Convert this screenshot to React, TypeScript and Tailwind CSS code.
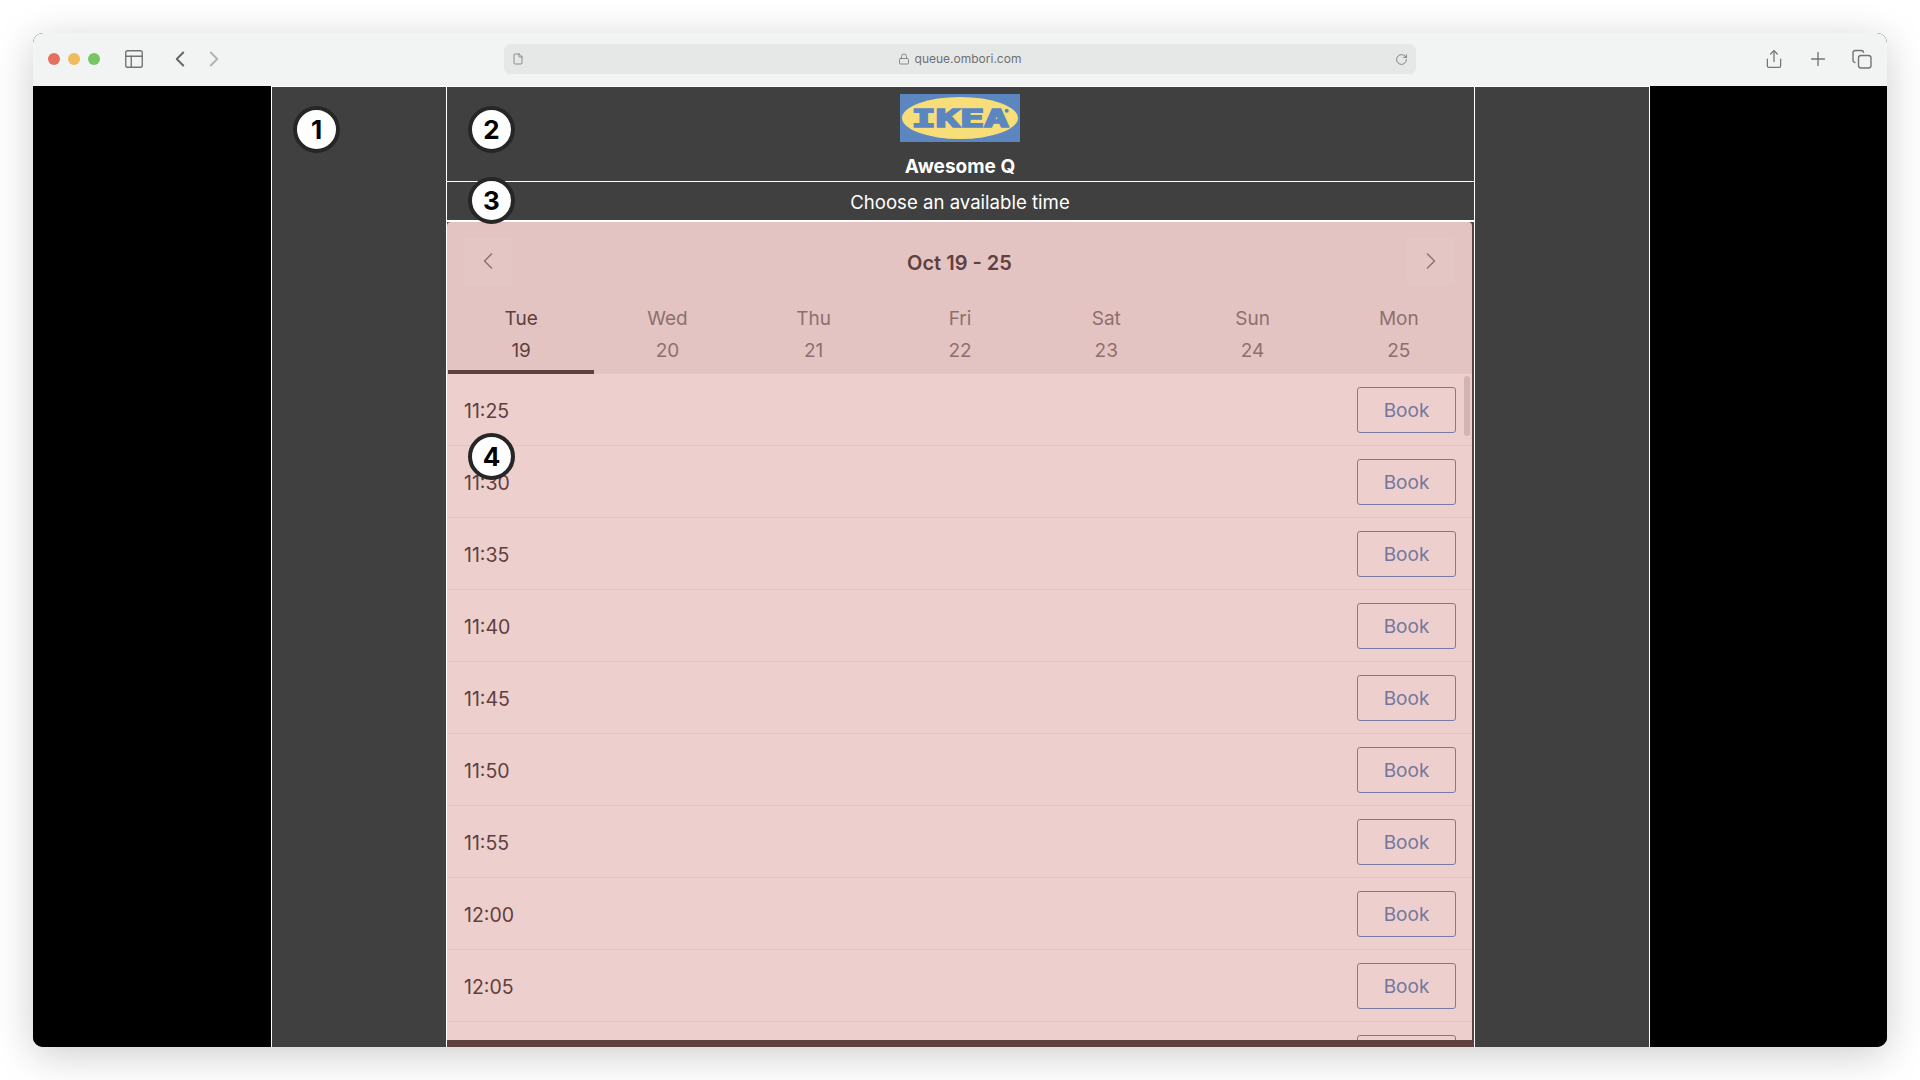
import { ChevronLeft, ChevronRight, File, Lock, PanelsTopLeft, Plus, RotateCw, Share } from 'lucide-react';

const days = [
  { name: 'Tue', date: 19 },
  { name: 'Wed', date: 20 },
  { name: 'Thu', date: 21 },
  { name: 'Fri', date: 22 },
  { name: 'Sat', date: 23 },
  { name: 'Sun', date: 24 },
  { name: 'Mon', date: 25 },
];

const times = ['11:25', '11:30', '11:35', '11:40', '11:45', '11:50', '11:55', '12:00', '12:05', '12:10'];

function Marker({ n, className }: { n: number; className: string }) {
  return (
    <div
      className={`absolute z-10 flex h-[47px] w-[47px] items-center justify-center rounded-full border-[4px] border-[#262626] bg-white text-[26px] font-bold text-black ${className}`}
    >
      {n}
    </div>
  );
}

function IkeaLogo() {
  return (
    <svg width="120" height="48" viewBox="0 0 120 48" className="block shrink-0">
      <rect width="120" height="48" fill="#5b86c0" />
      <ellipse cx="60" cy="24" rx="58" ry="21" fill="#f8de78" />
      <text
        x="60"
        y="32.5"
        textAnchor="middle"
        fontFamily="DejaVu Sans Mono"
        fontWeight="700"
        fontSize="25"
        textLength="97"
        lengthAdjust="spacingAndGlyphs"
        fill="#5b86c0"
        stroke="#5b86c0"
        strokeWidth="1.7"
      >
        IKEA
      </text>
      <circle cx="106.7" cy="16.7" r="2" fill="#5b86c0" />
    </svg>
  );
}

function TabsIcon() {
  return (
    <svg width="20" height="20" viewBox="0 0 20 20" fill="none" stroke="#737373" strokeWidth="1.4">
      <path d="M3.5 13.5h-.2A2.3 2.3 0 0 1 1 11.2V3.8A2.3 2.3 0 0 1 3.3 1.5h5.9A2.3 2.3 0 0 1 11.5 3.8" />
      <rect x="6.5" y="6.5" width="12.5" height="12.5" rx="2.4" />
    </svg>
  );
}

function TitleBar() {
  return (
    <div className="flex h-[53px] shrink-0 items-center bg-[#f2f4f3] pb-[1px] text-[#737373]">
      <div className="ml-[15px] flex gap-2">
        <span className="h-3 w-3 rounded-full bg-[#e2725f]" />
        <span className="h-3 w-3 rounded-full bg-[#efbb5c]" />
        <span className="h-3 w-3 rounded-full bg-[#7ac563]" />
      </div>
      <PanelsTopLeft size={22} strokeWidth={1.5} className="ml-[23px]" />
      <ChevronLeft size={26} strokeWidth={1.8} className="ml-[22px] text-[#666666]" />
      <ChevronRight size={26} strokeWidth={1.8} className="ml-2 text-[#b4b4b4]" />
      <div className="relative ml-[277px] flex h-[30px] w-[912px] items-center justify-between rounded-md bg-[#e6e8e7] px-2">
        <File size={12} strokeWidth={1.6} />
        <div className="flex items-center gap-[5px] text-[12px] text-[#6f6f6f]">
          <Lock size={12} strokeWidth={1.5} />
          <span>queue.ombori.com</span>
        </div>
        <RotateCw size={13} strokeWidth={1.6} />
      </div>
      <Share size={20} strokeWidth={1.5} className="ml-[348px]" />
      <Plus size={22} strokeWidth={1.5} className="ml-[23px]" />
      <div className="ml-[23px]">
        <TabsIcon />
      </div>
    </div>
  );
}

function Calendar() {
  return (
    <div className="flex min-h-0 flex-1 flex-col bg-[#5f3f3f] pr-[2px] pb-[7px]">
      <div className="shrink-0 rounded-t bg-[#e3c4c2]">
        <div className="flex items-start justify-between px-[17px] pt-[16px]">
          <button className="flex h-12 w-12 items-center justify-center bg-[#e4c6c4] pb-[2px] text-[#94726f]">
            <ChevronLeft size={28} strokeWidth={1.3} />
          </button>
          <div className="pt-[10px] text-[20px] font-semibold text-[#5f3f3f]">Oct 19 - 25</div>
          <button className="flex h-12 w-12 items-center justify-center bg-[#e4c6c4] pb-[2px] text-[#94726f]">
            <ChevronRight size={28} strokeWidth={1.3} />
          </button>
        </div>
        <div className="mt-[12px] flex pl-px">
          {days.map((d, i) => (
            <div
              key={d.name}
              className={`flex h-[76px] flex-1 flex-col items-center border-b-[4px] pt-[5px] text-[19px] leading-[32px] ${
                i === 0 ? 'border-[#5f3f3f] text-[#5f3f3f]' : 'border-transparent text-[#8f6f6e]'
              }`}
            >
              <span>{d.name}</span>
              <span>{d.date}</span>
            </div>
          ))}
        </div>
      </div>
      <div className="relative min-h-0 flex-1 overflow-hidden bg-[#edcfcd]">
        {times.map((t) => (
          <div key={t} className="flex h-[72px] items-start justify-between border-b border-[#e3c4c3] pt-[13px] pr-[16px] pl-[17px]">
            <span className="text-[19.5px] leading-[48px] text-[#5f3f3f]">{t}</span>
            <button className="h-[46px] w-[99px] rounded-[3px] border border-[#7a7aa2] pt-[2px] text-[19px] text-[#7676a0]">Book</button>
          </div>
        ))}
        <div className="absolute top-[2px] right-[2px] h-[60px] w-[6px] rounded-full bg-[#d4b4b3]" />
      </div>
    </div>
  );
}

export default function App() {
  return (
    <div className="h-screen w-full overflow-hidden bg-white pt-[33px] pl-[33px] [font-family:Inter,sans-serif]">
      <div className="flex h-[1014px] w-[1854px] flex-col overflow-hidden rounded-[10px] bg-black shadow-[0_8px_40px_rgba(0,0,0,0.2)]">
        <TitleBar />
        <div className="relative flex min-h-0 flex-1">
          <div className="w-[238px] shrink-0 bg-black" />
          <div className="w-[175px] shrink-0 border-t border-l border-white bg-[#404040]" />
          <div className="flex w-[1029px] shrink-0 flex-col border-x border-t border-white bg-[#404040]">
            <div className="flex h-[95px] shrink-0 flex-col items-center border-b border-white pt-[7px] pr-px">
              <IkeaLogo />
              <div className="mt-[11px] text-[19px] leading-[28px] font-bold text-white">Awesome Q</div>
            </div>
            <div className="flex h-[40px] shrink-0 items-center justify-center border-b-2 border-white pt-[4px] pr-px text-[18.6px] text-white">
              Choose an available time
            </div>
            <Calendar />
          </div>
          <div className="w-[175px] shrink-0 border-t border-r border-white bg-[#404040]" />
          <div className="flex-1 bg-black" />
          <Marker n={1} className="top-[20px] left-[260px]" />
          <Marker n={2} className="top-[20px] left-[435px]" />
          <Marker n={3} className="top-[91px] left-[435px]" />
          <Marker n={4} className="top-[347px] left-[435px]" />
        </div>
      </div>
    </div>
  );
}
